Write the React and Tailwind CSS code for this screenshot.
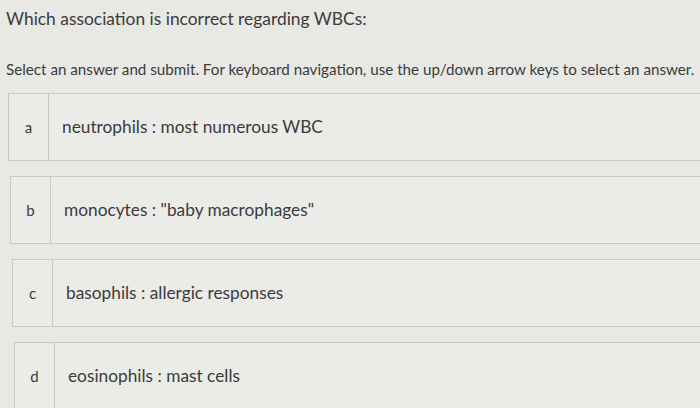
import React from "react";

const options = [
  { key: "a", text: "neutrophils : most numerous WBC", shift: "ml-0" },
  { key: "b", text: 'monocytes : "baby macrophages"', shift: "ml-[2px]" },
  { key: "c", text: "basophils : allergic responses", shift: "ml-[4px]" },
  { key: "d", text: "eosinophils : mast cells", shift: "ml-[6px]" },
];

const App = () => {
  return (
    <div
      className="w-[700px] h-[408px] overflow-hidden bg-[#e8e8e5] text-[#3b3b3b]"
      style={{ fontFamily: "Lato, 'Open Sans', sans-serif" }}
    >
      <h1 className="pl-[6px] pt-[7px] text-[17.4px] leading-[24px]">
        Which association is incorrect regarding WBCs:
      </h1>
      <p className="pl-[6px] mt-[29px] text-[15.2px] leading-[19px] whitespace-nowrap">
        Select an answer and submit. For keyboard navigation, use the up/down
        arrow keys to select an answer.
      </p>

      <div className="mt-[14px] pl-[8px] flex flex-col gap-[15px]">
        {options.map((opt) => (
          <div
            key={opt.key}
            className={`w-[720px] h-[68px] flex border border-[#c9c9c5] bg-[#ebebe8] ${opt.shift}`}
          >
            <div className="w-[40px] shrink-0 border-r border-[#c9c9c5] flex items-center justify-center text-[15px]">
              {opt.key}
            </div>
            <div className="flex items-center pl-[13px] text-[17.3px]">
              {opt.text}
            </div>
          </div>
        ))}
      </div>
    </div>
  );
};

export default App;
